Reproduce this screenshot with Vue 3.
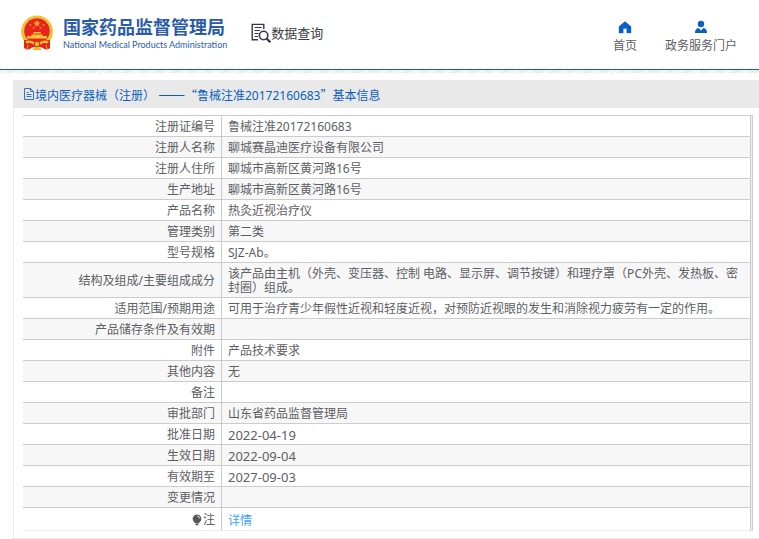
<script setup>
const rows = [
  { label: '注册证编号', value: '鲁械注准20172160683' },
  { label: '注册人名称', value: '聊城赛晶迪医疗设备有限公司' },
  { label: '注册人住所', value: '聊城市高新区黄河路16号' },
  { label: '生产地址', value: '聊城市高新区黄河路16号' },
  { label: '产品名称', value: '热灸近视治疗仪' },
  { label: '管理类别', value: '第二类' },
  { label: '型号规格', value: 'SJZ-Ab。' },
  {
    label: '结构及组成/主要组成成分',
    value: '该产品由主机（外壳、变压器、控制 电路、显示屏、调节按键）和理疗罩（PC外壳、发热板、密封圈）组成。'
  },
  {
    label: '适用范围/预期用途',
    value: '可用于治疗青少年假性近视和轻度近视，对预防近视眼的发生和消除视力疲劳有一定的作用。'
  },
  { label: '产品储存条件及有效期', value: '' },
  { label: '附件', value: '产品技术要求' },
  { label: '其他内容', value: '无' },
  { label: '备注', value: '' },
  { label: '审批部门', value: '山东省药品监督管理局' },
  { label: '批准日期', value: '2022-04-19', date: true },
  { label: '生效日期', value: '2022-09-04', date: true },
  { label: '有效期至', value: '2027-09-03', date: true },
  { label: '变更情况', value: '' }
]
</script>

<template>
  <div class="page">
    <header class="top">
      <a class="brand" href="#">
        <svg class="emblem" viewBox="0 0 34 36" aria-hidden="true">
          <circle cx="17" cy="16.5" r="16" fill="#f5c840" />
          <circle cx="17" cy="16.5" r="14.6" fill="none" stroke="#e9ac2c" stroke-width="1" stroke-dasharray="2 1.4" />
          <path d="M4 25 L30 25 L30 33 Q26 36 23 33 L17 31 L11 33 Q8 36 4 33 Z" fill="#e1261c" />
          <circle cx="17" cy="16" r="12.8" fill="#e8251d" />
          <path d="M17 4.6 L18 7.3 L20.8 7.4 L18.6 9.1 L19.4 11.8 L17 10.2 L14.6 11.8 L15.4 9.1 L13.2 7.4 L16 7.3 Z" fill="#f5a52e" />
          <g fill="#f6a336">
            <circle cx="10.5" cy="10" r=".9" />
            <circle cx="23.5" cy="10" r=".9" />
            <circle cx="13.5" cy="12.8" r=".9" />
            <circle cx="20.5" cy="12.8" r=".9" />
          </g>
          <g fill="#fbc63a">
            <path d="M12.5 18.6 L14 17 H20 L21.5 18.6 Z" />
            <path d="M11.5 19.4 H22.5 V21 H27 V23.6 H7 V21 H11.5 Z" />
          </g>
          <path d="M5 26 Q11 24.5 14 27 H20 Q23 24.5 29 26 L27 28.5 Q23 27 20.5 29.5 H13.5 Q11 27 7 28.5 Z" fill="#f5c02c" />
          <circle cx="17" cy="29" r="2.7" fill="#f5c02c" stroke="#e1261c" />
          <path d="M8 30 L7 34 M26 30 L27 34" stroke="#f3a325" stroke-width="1" />
          <path d="M12 35 Q14 32 17 32 Q20 32 22 35 Z" fill="#f5b528" />
        </svg>
        <span class="names">
          <span class="name-cn">国家药品监督管理局</span>
          <span class="name-en">National Medical Products Administration</span>
        </span>
      </a>
      <a class="query" href="#">
        <svg class="query-icon" viewBox="0 0 20 20" aria-hidden="true">
          <path d="M7 16.8 H1.2 V1.4 H12.8 V6" fill="none" stroke="#39394b" stroke-width="1.4" />
          <path d="M3.5 4.5 H10.5 M3.5 7.5 H9 M3.5 10.5 H7.5 M3.5 13.5 H7" stroke="#39394b" stroke-width="1.1" />
          <circle cx="12.6" cy="12.5" r="4.2" fill="#fff" stroke="#39394b" stroke-width="1.6" />
          <path d="M15.6 15.5 L19.3 19.2" stroke="#39394b" stroke-width="2.4" />
        </svg>
        <span>数据查询</span>
      </a>
      <nav class="nav">
        <a class="nav-item" href="#">
          <svg class="nav-icon" viewBox="0 0 14 14" aria-hidden="true">
            <path d="M7 1.5 L13 6.6 V13 H8.8 V8.6 H5.2 V13 H1 V6.6 Z" fill="#0a5fc4" stroke="#0a5fc4" stroke-linejoin="round" stroke-width=".4" />
          </svg>
          <span>首页</span>
        </a>
        <a class="nav-item" href="#">
          <svg class="nav-icon" viewBox="0 0 14 14" aria-hidden="true">
            <circle cx="7" cy="4" r="3.2" fill="#0a5fc4" />
            <path d="M1 13 Q1 8.6 4.6 8 L7 10.4 L9.4 8 Q13 8.6 13 13 Z" fill="#0a5fc4" />
          </svg>
          <span>政务服务门户</span>
        </a>
      </nav>
    </header>
    <div class="hatch"></div>

    <main class="panel">
      <h1 class="title">
        <svg class="doc-icon" viewBox="0 0 12 12" aria-hidden="true">
          <path d="M1.5 .5 H7.5 L10.5 3.5 V11.5 H1.5 Z M7.5 .5 V3.5 H10.5 M3.5 6.5 H8.5 M3.5 8.5 H8.5 M3.5 4.5 H5.5" fill="none" stroke="#2f74c8" />
        </svg>
        <span>境内医疗器械（注册） <span class="dash">——</span><span class="quote">“</span>鲁械注准20172160683<span class="quote">”</span>基本信息</span>
      </h1>
      <div class="frame">
        <table class="info">
          <tbody>
            <tr v-for="row in rows" :key="row.label">
              <th scope="row">{{ row.label }}</th>
              <td :class="{ date: row.date }">{{ row.value }}</td>
            </tr>
            <tr class="note">
              <th scope="row">
                <span class="note-label">
                  <svg class="bulb" viewBox="0 0 10 12" aria-hidden="true">
                    <path d="M5 .5 A4.3 4.3 0 0 1 7.6 8.2 L6.8 9.4 H3.2 L2.4 8.2 A4.3 4.3 0 0 1 5 .5 Z M3.6 10 H6.4 V11.2 H3.6 Z" fill="#55575b" />
                    <path d="M5.4 2 Q7.4 2.3 7.7 4.4" fill="none" stroke="#fff" stroke-width=".9" />
                  </svg>
                  <span>注</span>
                </span>
              </th>
              <td><a class="detail" href="#">详情</a></td>
            </tr>
          </tbody>
        </table>
      </div>
    </main>
  </div>
</template>

<style>
body {
  margin: 0;
  background: #fff;
}
</style>

<style scoped>
.page {
  overflow-x: hidden;
  font-family: "Noto Sans", "Noto Sans CJK SC", sans-serif;
  font-size: 12px;
  line-height: 14px;
  color: #5c5e63;
}

a {
  color: inherit;
  text-decoration: none;
}

.quote {
  font-family: "Noto Sans CJK SC", sans-serif;
}

.dash {
  font-family: "Noto Sans CJK JP", sans-serif;
  font-size: 16px;
}

.top {
  display: flex;
  align-items: center;
  box-sizing: border-box;
  height: 70px;
  padding: 0 22px 4px 20px;
  border-bottom: 1px solid #0b5fb8;
}

.brand {
  display: flex;
  align-items: center;
  gap: 9px;
  color: #2a5cab;
}

.emblem {
  width: 34px;
  height: 36px;
}

.names {
  display: flex;
  flex-direction: column;
  gap: 2px;
  white-space: nowrap;
}

.name-cn {
  font-size: 18px;
  line-height: 22px;
  font-weight: 700;
}

.name-en {
  font-family: Lato, sans-serif;
  font-size: 9px;
  line-height: 10px;
  font-weight: 400;
}

.query {
  display: flex;
  align-items: center;
  margin-left: 24px;
  font-size: 13px;
  line-height: 18px;
  color: #3c3c44;
  white-space: nowrap;
}

.query-icon {
  width: 20px;
  height: 20px;
}

.nav {
  display: flex;
  gap: 28px;
  margin-left: auto;
}

.nav-item {
  display: flex;
  flex-direction: column;
  align-items: center;
  gap: 5px;
  padding-top: 8px;
  white-space: nowrap;
}

.nav-icon {
  width: 14px;
  height: 14px;
}

.hatch {
  height: 3px;
  background: repeating-linear-gradient(135deg, #fff 0 1px, #e4e4e4 1px 2px);
}

.panel {
  margin: 7px 0 0 13px;
  padding-bottom: 7px;
  border-left: 1px solid #e9e9e9;
  border-bottom: 1px solid #e9e9e9;
}

.title {
  display: flex;
  align-items: center;
  height: 28px;
  margin: 0 0 7px;
  padding-left: 9px;
  background: #e9e9e9;
  color: #0a5fc0;
  font-size: 12px;
  font-weight: 400;
}

.doc-icon {
  width: 12px;
  height: 12px;
}

.frame {
  margin: 0 6px 0 9px;
  padding-right: 1px;
  border-top: 1px solid #ccc;
  border-right: 1px solid #ccc;
  background: #ededf3;
}

.info {
  width: 100%;
  border-spacing: 0;
  background: #fff;
}

.info th,
.info td {
  height: 14px;
  padding: 4px 6px 2px;
  border-right: 1px solid #ccc;
  border-bottom: 1px solid #ccc;
  font-weight: 400;
  text-align: left;
}

.info th {
  width: 186px;
  text-align: right;
}

.info tr:nth-child(even) {
  background: #f7f7f7;
}

.info td.date {
  font-size: 13px;
}

.info .note th,
.info .note td {
  padding: 5px 6px 3px;
  border-bottom-color: #ebeef5;
}

.info .note td {
  padding: 6px 6px 2px;
}

.note-label {
  display: flex;
  align-items: center;
  justify-content: flex-end;
  gap: 1px;
}

.bulb {
  width: 10px;
  height: 12px;
}

.detail {
  color: #409eff;
}
</style>
